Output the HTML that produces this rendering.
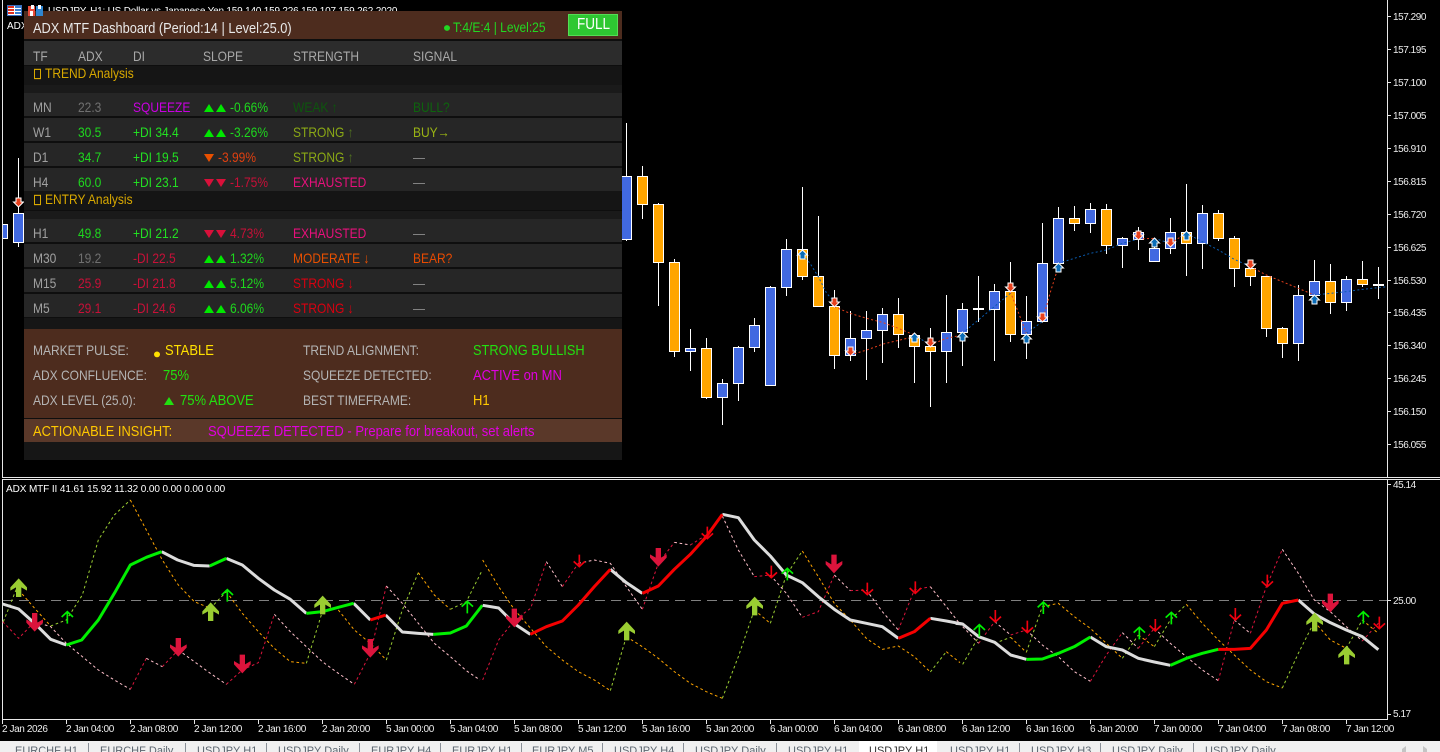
<!DOCTYPE html>
<html><head><meta charset="utf-8"><title>ADX MTF</title>
<style>
html,body{margin:0;padding:0;background:#000;width:1440px;height:752px;overflow:hidden}
body{position:relative;font-family:"Liberation Sans",sans-serif}
svg.m{position:absolute;left:0;top:0}
svg text{font-family:"Liberation Sans",sans-serif}
.ax{font-size:10px;fill:#eee;letter-spacing:-.45px}
.tm{font-size:10px;fill:#eee;letter-spacing:-.4px}
.tab{font-size:11px;fill:#5c6670}
.d{fill:none;stroke-width:3;stroke-dasharray:8 8}
.o{stroke:#ffa500}.y{stroke:#9acd32}.c{stroke:#dc143c}.p{stroke:#ffc0cb}
.l{fill:none;stroke-width:9;stroke-linejoin:round}
.w{stroke:#dcdcdc}.g{stroke:#00f000}.r{stroke:#f50000}
.cd{stroke:#fff;stroke-width:1}
.b{fill:#4169e1}.a{fill:#ffa500}
.dd{fill:none;stroke-width:3;stroke-dasharray:6 7}
.bl{stroke:#0a5cb0}.rd{stroke:#e8401c}
#panel{position:absolute;left:24px;top:11px;width:598px;height:449px;background:#0e0e0e;overflow:hidden}
#panel div{position:absolute;left:0;width:598px}
.rw{background:#262626;height:23px}
.sec{background:#151515;height:19px}
.ln{position:absolute;left:0;width:1440px;height:14px;white-space:nowrap;font-size:12px;line-height:14px;transform:scaleY(1.15);transform-origin:0 11px}
.ln span{position:absolute;top:0;white-space:nowrap}
.box{display:inline-block;width:5px;height:7px;border:1px solid #d8a800;position:absolute;top:3px}
.tu,.td{position:absolute;top:4px;width:0;height:0;border-left:5px solid transparent;border-right:5px solid transparent}
.tu{border-bottom:7px solid #00e800}
.td{border-top:7px solid #d8103a}
.dot{position:absolute;width:6px;height:5px;border-radius:50%}
</style></head><body>
<svg class="m" width="1440" height="752" viewBox="0 0 1440 752" xmlns="http://www.w3.org/2000/svg">
<defs>
<polygon id="bu" points="0,0 25,27 25,37 8,27 8,56 -8,56 -8,27 -25,37 -25,27" fill="#9acd32"/>
<polygon id="bd" points="0,0 25,-27 25,-37 8,-27 8,-56 -8,-56 -8,-27 -25,-37 -25,-27" fill="#dc143c"/>
<path id="su" d="M0,2V38M-17,18L0,2L17,18" fill="none" stroke="#00f000" stroke-width="5"/>
<path id="sd" d="M0,-2V-38M-17,-18L0,-2L17,-18" fill="none" stroke="#f00010" stroke-width="5"/>
<polygon id="mu" points="0,-5 5,0 2.500,0 2.500,4 -2.500,4 -2.500,0 -5,0" fill="#0a6cb8" stroke="#fff" stroke-width="1"/>
<polygon id="md" points="0,5 5,0 2.500,0 2.500,-4 -2.500,-4 -2.500,0 -5,0" fill="#e8401c" stroke="#fff" stroke-width="1"/>
</defs>
<rect width="1440" height="752" fill="#000"/>
<!-- top text -->
<text x="48" y="14" font-size="10" fill="#fff" letter-spacing="-.2">USDJPY, H1: US Dollar vs Japanese Yen 159.140 159.226 159.107 159.262 2020</text>
<text x="7" y="29" font-size="10" fill="#fff">ADX MTF</text>
<!-- candles -->
<g class="cd" shape-rendering="crispEdges">
<path d="M18.500 158V247M626.500 123V241M642.500 166V219M658.500 203V306M674.500 259V357M690.500 329V371M706.500 338V399M722.500 379V425M738.500 346V401M754.500 318V352M770.500 286V385M786.500 239V296M802.500 187V280M818.500 216V306M834.500 290V369M850.500 311V361M866.500 311V380M882.500 308V363M898.500 298V348M914.500 335V383M930.500 328V407M946.500 295V383M962.500 303V366M978.500 276V322M994.500 284V361M1010.500 262V342M1026.500 296V359M1042.500 223V321M1058.500 207V263M1074.500 206V231M1090.500 203V233M1106.500 204V254M1122.500 237V268M1138.500 227V250M1154.500 238V261M1170.500 218V254M1186.500 184V276M1202.500 205V269M1218.500 210V241M1234.500 236V287M1250.500 268V286M1266.500 276V337M1282.500 327V358M1298.500 285V361M1314.500 260V296M1330.500 264V314M1346.500 276V311M1362.500 261V287M1378.500 267V299"/>
<rect class="b" x="-2.500" y="224.500" width="10" height="14"/>
<rect class="b" x="13.500" y="213.500" width="10" height="29"/>
<rect class="b" x="621.500" y="176.500" width="10" height="63"/>
<rect class="a" x="637.500" y="176.500" width="10" height="28"/>
<rect class="a" x="653.500" y="204.500" width="10" height="58"/>
<rect class="a" x="669.500" y="262.500" width="10" height="89"/>
<rect class="b" x="685.500" y="348.500" width="10" height="3"/>
<rect class="a" x="701.500" y="348.500" width="10" height="49"/>
<rect class="b" x="717.500" y="383.500" width="10" height="14"/>
<rect class="b" x="733.500" y="347.500" width="10" height="36"/>
<rect class="b" x="749.500" y="325.500" width="10" height="22"/>
<rect class="b" x="765.500" y="287.500" width="10" height="98"/>
<rect class="b" x="781.500" y="249.500" width="10" height="38"/>
<rect class="a" x="797.500" y="249.500" width="10" height="27"/>
<rect class="a" x="813.500" y="276.500" width="10" height="30"/>
<rect class="a" x="829.500" y="306.500" width="10" height="49"/>
<rect class="b" x="845.500" y="338.500" width="10" height="17"/>
<rect class="b" x="861.500" y="330.500" width="10" height="8"/>
<rect class="b" x="877.500" y="314.500" width="10" height="16"/>
<rect class="a" x="893.500" y="314.500" width="10" height="20"/>
<rect class="a" x="909.500" y="335.500" width="10" height="11"/>
<rect class="a" x="925.500" y="346.500" width="10" height="5"/>
<rect class="b" x="941.500" y="332.500" width="10" height="19"/>
<rect class="b" x="957.500" y="309.500" width="10" height="23"/>
<rect x="973" y="308" width="11" height="2" fill="#fff" stroke="none"/>
<rect class="b" x="989.500" y="291.500" width="10" height="18"/>
<rect class="a" x="1005.500" y="291.500" width="10" height="43"/>
<rect class="b" x="1021.500" y="321.500" width="10" height="13"/>
<rect class="b" x="1037.500" y="263.500" width="10" height="58"/>
<rect class="b" x="1053.500" y="218.500" width="10" height="45"/>
<rect class="a" x="1069.500" y="218.500" width="10" height="5"/>
<rect class="b" x="1085.500" y="209.500" width="10" height="14"/>
<rect class="a" x="1101.500" y="209.500" width="10" height="36"/>
<rect class="b" x="1117.500" y="238.500" width="10" height="7"/>
<rect class="b" x="1133.500" y="232.500" width="10" height="7"/>
<rect class="b" x="1149.500" y="248.500" width="10" height="13"/>
<rect class="b" x="1165.500" y="232.500" width="10" height="16"/>
<rect class="a" x="1181.500" y="232.500" width="10" height="11"/>
<rect class="b" x="1197.500" y="213.500" width="10" height="30"/>
<rect class="a" x="1213.500" y="213.500" width="10" height="25"/>
<rect class="a" x="1229.500" y="238.500" width="10" height="30"/>
<rect class="a" x="1245.500" y="268.500" width="10" height="8"/>
<rect class="a" x="1261.500" y="276.500" width="10" height="52"/>
<rect class="a" x="1277.500" y="328.500" width="10" height="15"/>
<rect class="b" x="1293.500" y="295.500" width="10" height="48"/>
<rect class="b" x="1309.500" y="281.500" width="10" height="14"/>
<rect class="a" x="1325.500" y="281.500" width="10" height="21"/>
<rect class="b" x="1341.500" y="279.500" width="10" height="23"/>
<rect class="a" x="1357.500" y="279.500" width="10" height="5"/>
<rect x="1373" y="284" width="11" height="2" fill="#fff" stroke="none"/>
</g>
<rect x="0" y="0" width="2" height="752" fill="#000"/>
<!-- frames -->
<g fill="#e8e8e8">
<rect x="2" y="0" width="1" height="478"/><rect x="1387" y="0" width="1" height="478"/>
<rect x="2" y="477" width="1438" height="1"/><rect x="2" y="479" width="1438" height="1"/>
<rect x="2" y="479" width="1" height="241"/><rect x="1387" y="479" width="1" height="241"/>
<rect x="2" y="719" width="1386" height="1"/>
<rect x="1387" y="484" width="4" height="1"/><rect x="1387" y="600" width="4" height="1"/><rect x="1387" y="714" width="4" height="1"/>
<rect x="1387" y="16" width="4" height="1"/><rect x="1387" y="49" width="4" height="1"/><rect x="1387" y="82" width="4" height="1"/><rect x="1387" y="115" width="4" height="1"/><rect x="1387" y="148" width="4" height="1"/><rect x="1387" y="181" width="4" height="1"/><rect x="1387" y="214" width="4" height="1"/><rect x="1387" y="247" width="4" height="1"/><rect x="1387" y="280" width="4" height="1"/><rect x="1387" y="312" width="4" height="1"/><rect x="1387" y="345" width="4" height="1"/><rect x="1387" y="378" width="4" height="1"/><rect x="1387" y="411" width="4" height="1"/><rect x="1387" y="444" width="4" height="1"/>
<rect x="2" y="720" width="1" height="4"/><rect x="66" y="720" width="1" height="4"/><rect x="130" y="720" width="1" height="4"/><rect x="194" y="720" width="1" height="4"/><rect x="258" y="720" width="1" height="4"/><rect x="322" y="720" width="1" height="4"/><rect x="386" y="720" width="1" height="4"/><rect x="450" y="720" width="1" height="4"/><rect x="514" y="720" width="1" height="4"/><rect x="578" y="720" width="1" height="4"/><rect x="642" y="720" width="1" height="4"/><rect x="706" y="720" width="1" height="4"/><rect x="770" y="720" width="1" height="4"/><rect x="834" y="720" width="1" height="4"/><rect x="898" y="720" width="1" height="4"/><rect x="962" y="720" width="1" height="4"/><rect x="1026" y="720" width="1" height="4"/><rect x="1090" y="720" width="1" height="4"/><rect x="1154" y="720" width="1" height="4"/><rect x="1218" y="720" width="1" height="4"/><rect x="1282" y="720" width="1" height="4"/><rect x="1346" y="720" width="1" height="4"/>
</g>
<!-- price axis -->
<g class="ax">
<text x="1393" y="20">157.290</text><text x="1393" y="53">157.195</text><text x="1393" y="86">157.100</text><text x="1393" y="119">157.005</text><text x="1393" y="152">156.910</text><text x="1393" y="185">156.815</text><text x="1393" y="218">156.720</text><text x="1393" y="251">156.625</text><text x="1393" y="284">156.530</text><text x="1393" y="316">156.435</text><text x="1393" y="349">156.340</text><text x="1393" y="382">156.245</text><text x="1393" y="415">156.150</text><text x="1393" y="448">156.055</text>
<text x="1393" y="488">45.14</text><text x="1393" y="604">25.00</text><text x="1393" y="717">5.17</text>
</g>
<!-- price dashed -->
<g transform="translate(620,120) scale(.33333)">
<path class="dd bl" d="M547,404L570,430L595,470L620,520L643,545M883,645L931,675M1027,640L1075,600L1123,560L1171,520"/>
<path class="dd rd" d="M643,560L690,580L740,595L790,608L835,625L883,645M691,705L740,690L790,672L840,660L883,650M931,675L979,655L1027,645"/>
</g>
<g transform="translate(1000,160) scale(.33333)">
<path class="dd rd" d="M31,395L60,470L79,520M127,485L150,400L175,320M415,237L463,235M511,250L559,220M751,320L799,345L847,365L895,385L943,405"/>
<path class="dd bl" d="M79,520L127,485M175,310L223,295L271,280L319,270L367,250L415,237M463,235L511,250M559,220L607,245L655,270L703,298L751,320M943,405L991,400L1039,395L1087,388L1135,383L1162,380"/>
</g>
<use href="#md" x="18.500" y="202"/><use href="#mu" x="802.500" y="255"/><use href="#md" x="834.500" y="302"/><use href="#md" x="850.500" y="351"/><use href="#mu" x="914.500" y="338"/><use href="#md" x="930.500" y="342"/><use href="#mu" x="962.500" y="337"/><use href="#md" x="1010.500" y="287"/><use href="#mu" x="1026.500" y="339"/><use href="#md" x="1042.500" y="317"/><use href="#mu" x="1058.500" y="268"/><use href="#md" x="1138.500" y="235"/><use href="#mu" x="1154.500" y="243"/><use href="#md" x="1170.500" y="242"/><use href="#mu" x="1186.500" y="236"/><use href="#md" x="1250.500" y="264"/><use href="#mu" x="1314.500" y="300"/>
<!-- indicator -->
<text x="6" y="492" font-size="10" fill="#fff" letter-spacing="-.1">ADX MTF II 41.61 15.92 11.32 0.00 0.00 0.00 0.00</text>
<line x1="3" y1="600.500" x2="1387" y2="600.500" stroke="#808080" stroke-width="1" stroke-dasharray="10 6"/>
<g transform="translate(0,480) scale(.33333)">
<path class="d y" d="M10,425L30,375L56,310M152,438L199,420L247,345L295,180L343,105L391,60M631,385L679,335M919,550L967,395M1159,540L1207,390L1255,278M1351,388L1399,365L1447,270"/>
<path class="d o" d="M56,330L104,385L152,438M391,60L439,150L487,240L535,315L583,365L631,385M679,335L727,400L775,455L823,505L871,545L919,550M1015,390L1063,450L1111,490L1159,540M1255,278L1303,345L1351,388"/>
<path class="d c" d="M8,425L56,475L104,425M391,628L439,535M487,560L535,510M679,613L727,570L775,548L823,403M1063,613L1111,520L1159,318"/>
<path class="d p" d="M104,425L152,440L199,490L247,530L295,570L343,600L391,628M439,535L487,560M535,510L583,545L631,580L679,613M823,403L871,455L919,500L967,545L1015,580L1063,613M1159,318L1207,370L1255,430L1303,490L1351,530L1399,572L1440,600"/>
<path class="l w" d="M8,372L56,387L104,430L152,478L199,495M485,215L533,240L581,256L629,258M679,235L727,255L775,295L823,330L871,358L919,400M1061,370L1111,420M1157,405L1207,456L1255,460L1300,463"/>
<path class="l g" d="M199,495L245,480L295,420L343,340L391,255L439,232L485,215M629,258L679,235M919,400L967,395L1015,382L1061,370M1300,463L1351,459L1399,438L1447,376"/>
<path class="l r" d="M1111,420L1157,405"/>
<use href="#bu" x="56" y="295"/><use href="#bu" x="632" y="367"/><use href="#bu" x="968" y="347"/>
<use href="#bd" x="104" y="455"/><use href="#bd" x="535" y="530"/><use href="#bd" x="727" y="580"/><use href="#bd" x="1111" y="533"/>
<use href="#su" x="202" y="393"/><use href="#su" x="682" y="327"/><use href="#su" x="1402" y="362"/>
</g>
<g transform="translate(480,480) scale(.33333)">
<path class="d o" d="M8,240L56,320L104,390L152,445L199,500L247,540L295,575L343,600L391,632M439,470L487,500L535,535L583,575L631,610L679,635L727,655M823,390L871,430M967,213L1015,290L1063,370L1111,420L1159,475L1207,508L1255,498L1303,530L1351,576M1399,515L1440,548"/>
<path class="d y" d="M391,632L439,470M727,655L775,530L823,390M871,430L919,285L967,213M1351,576L1399,515"/>
<path class="d c" d="M8,600L56,480L104,420L152,385L199,245M247,320L295,250M487,388L535,250L583,187M631,195L679,165L727,108M823,290L871,285M967,412L1015,395L1063,285M1111,332L1159,330M1255,450L1303,330L1351,320"/>
<path class="d p" d="M199,245L247,320M295,250L343,240L391,250L439,320L487,388M583,187L631,195M727,108L775,210L823,290M871,285L919,340L967,412M1063,285L1111,332M1159,330L1207,395L1255,450M1351,320L1399,380L1440,432"/>
<path class="l w" d="M8,376L56,384L104,432L151,463M391,268L439,308L487,340M727,103L775,113L823,180L871,228L919,285L967,308L1015,350L1063,388L1111,420L1159,430L1207,440L1255,475M1351,415L1399,423L1447,432"/>
<path class="l r" d="M151,463L199,440L247,423L295,375L343,320L391,268M487,340L535,318L583,268L631,223L679,170L727,103M1255,475L1303,455L1351,415"/>
<use href="#bu" x="440" y="425"/><use href="#bu" x="824" y="350"/>
<use href="#bd" x="103" y="442"/><use href="#bd" x="535" y="260"/><use href="#bd" x="1062" y="280"/>
<use href="#sd" x="298" y="262"/><use href="#sd" x="682" y="178"/><use href="#sd" x="874" y="295"/><use href="#sd" x="1162" y="346"/><use href="#sd" x="1306" y="342"/>
<use href="#su" x="922" y="263"/>
</g>
<g transform="translate(960,480) scale(.33333)">
<path class="d y" d="M8,553L56,470M104,490L152,472M199,517L247,380M487,535L535,465M583,500L631,420L679,373M967,624L1015,520L1063,425M1159,505L1207,420"/>
<path class="d o" d="M56,470L104,490M152,472L199,517M247,380L295,370L343,410L391,445L439,490L487,535M535,465L583,500M679,373L727,430L775,480L823,525L871,570L919,605L967,624M1063,425L1111,480L1159,505M1207,420L1255,460"/>
<path class="d p" d="M8,440L56,490M104,425L152,465M199,450L247,495L295,530L343,575L391,604M487,458L535,505M583,445L631,490L679,530L727,570L775,602M823,420L871,460M967,208L1015,280L1063,360L1111,395L1159,440L1207,483"/>
<path class="d c" d="M56,490L104,425M152,465L199,450M391,604L439,525L487,458M535,505L583,445M775,602L823,420M871,460L919,320L967,208M1207,483L1255,430"/>
<path class="l w" d="M-13,430L8,432L56,470L104,487L152,525L199,538M391,471L439,500L487,510L535,535L583,546L631,556M1015,360L1063,402L1111,428L1159,450L1207,470L1255,509"/>
<path class="l g" d="M199,538L247,537L295,520L343,500L391,471M631,556L679,535L727,520L775,508"/>
<path class="l r" d="M775,508L823,508L871,505L919,450L967,370L1015,360"/>
<use href="#bu" x="1064" y="398"/><use href="#bu" x="1160" y="497"/>
<use href="#bd" x="1111" y="397"/>
<use href="#su" x="58" y="432"/><use href="#su" x="250" y="364"/><use href="#su" x="538" y="440"/><use href="#su" x="634" y="395"/><use href="#su" x="1210" y="393"/>
<use href="#sd" x="106" y="428"/><use href="#sd" x="202" y="460"/><use href="#sd" x="586" y="455"/><use href="#sd" x="826" y="422"/><use href="#sd" x="922" y="322"/><use href="#sd" x="1258" y="448"/>
</g>
<!-- time axis -->
<g class="tm">
<text x="2" y="732">2 Jan 2026</text><text x="66" y="732">2 Jan 04:00</text><text x="130" y="732">2 Jan 08:00</text><text x="194" y="732">2 Jan 12:00</text><text x="258" y="732">2 Jan 16:00</text><text x="322" y="732">2 Jan 20:00</text><text x="386" y="732">5 Jan 00:00</text><text x="450" y="732">5 Jan 04:00</text><text x="514" y="732">5 Jan 08:00</text><text x="578" y="732">5 Jan 12:00</text><text x="642" y="732">5 Jan 16:00</text><text x="706" y="732">5 Jan 20:00</text><text x="770" y="732">6 Jan 00:00</text><text x="834" y="732">6 Jan 04:00</text><text x="898" y="732">6 Jan 08:00</text><text x="962" y="732">6 Jan 12:00</text><text x="1026" y="732">6 Jan 16:00</text><text x="1090" y="732">6 Jan 20:00</text><text x="1154" y="732">7 Jan 00:00</text><text x="1218" y="732">7 Jan 04:00</text><text x="1282" y="732">7 Jan 08:00</text><text x="1346" y="732">7 Jan 12:00</text>
</g>
<!-- tabs -->
<rect x="0" y="741" width="1440" height="11" fill="#f0f0f0"/>
<rect x="859" y="741" width="78" height="11" fill="#fff"/>
<g fill="#8a9098"><rect x="88" y="743" width="1" height="9"/><rect x="185" y="743" width="1" height="9"/><rect x="266" y="743" width="1" height="9"/><rect x="359" y="743" width="1" height="9"/><rect x="440" y="743" width="1" height="9"/><rect x="521" y="743" width="1" height="9"/><rect x="602" y="743" width="1" height="9"/><rect x="683" y="743" width="1" height="9"/><rect x="776" y="743" width="1" height="9"/><rect x="1019" y="743" width="1" height="9"/><rect x="1100" y="743" width="1" height="9"/><rect x="1193" y="743" width="1" height="9"/></g>
<g class="tab">
<text x="15" y="754">EURCHF H1</text><text x="100" y="754">EURCHF Daily</text><text x="197" y="754">USDJPY H1</text><text x="278" y="754">USDJPY Daily</text><text x="371" y="754">EURJPY H4</text><text x="452" y="754">EURJPY H1</text><text x="532" y="754">EURJPY M5</text><text x="614" y="754">USDJPY H4</text><text x="695" y="754">USDJPY Daily</text><text x="788" y="754">USDJPY H1</text><text x="869" y="754" fill="#333">USDJPY H1</text><text x="950" y="754">USDJPY H1</text><text x="1031" y="754">USDJPY H3</text><text x="1112" y="754">USDJPY Daily</text><text x="1205" y="754">USDJPY Daily</text>
</g>
<polygon points="1402,749 1406,746 1406,752 1402,752" fill="#c4c4c4"/><polygon points="1427,749 1423,746 1423,752 1427,752" fill="#c4c4c4"/>
</svg>

<div id="panel">
<div style="top:0;height:28px;background:#4d2c1e"></div>
<div style="top:30px;height:24px;background:#2c2c2c"></div>
<div class="sec" style="top:55px"></div>
<div style="top:74px;height:8px;background:#1a1a1a"></div>
<div class="rw" style="top:82px"></div><div class="rw" style="top:107px"></div><div class="rw" style="top:132px"></div><div class="rw" style="top:157px"></div>
<div class="sec" style="top:180px"></div>
<div style="top:200px;height:8px;background:#1a1a1a"></div>
<div class="rw" style="top:208px"></div><div class="rw" style="top:233px"></div><div class="rw" style="top:258px"></div><div class="rw" style="top:283px"></div>
<div style="top:307px;height:11px;background:#161616"></div>
<div style="top:318px;height:89px;background:#4d2c1e"></div>
<div style="top:408px;height:23px;background:#5a3829"></div>
<div style="top:431px;height:18px;background:#161616"></div>
<div style="left:544px;top:3px;width:50px;height:22px;background:#2ec832;box-shadow:inset 0 0 0 1px #55dd55"></div>
</div>

<!-- top-left icons sit above the panel -->
<svg class="m" width="60" height="20" viewBox="0 0 60 20" xmlns="http://www.w3.org/2000/svg">
<rect x="7.500" y="5.500" width="14" height="10" fill="#fff" stroke="#3a6fc0"/><rect x="8" y="6" width="6" height="2" fill="#e03020"/><rect x="8" y="9" width="6" height="2" fill="#e03020"/><rect x="8" y="12" width="6" height="2" fill="#e03020"/><rect x="15" y="6" width="6" height="2" fill="#3a7fd0"/><rect x="15" y="9" width="6" height="2" fill="#3a7fd0"/><rect x="15" y="12" width="6" height="2" fill="#3a7fd0"/>
<rect x="28" y="6" width="7" height="10" fill="#e84a3a"/><rect x="36" y="6" width="7" height="10" fill="#2f86d0"/><rect x="31" y="5" width="3" height="4" fill="#fff"/><rect x="38" y="5" width="3" height="4" fill="#fff"/><rect x="30" y="11" width="3" height="5" fill="#fff"/>
</svg>

<div style="position:absolute;left:0;top:0;width:1440px;height:752px;overflow:hidden">
<div class="ln" style="top:22px;font-size:12.8px;color:#e8e8e8"><span style="left:33px">ADX MTF Dashboard (Period:14 | Level:25.0)</span></div>
<div class="ln" style="top:21px;color:#22d822"><i class="dot" style="left:444px;top:5px;background:#22d822"></i><span style="left:453px">T:4/E:4 | Level:25</span></div>
<div class="ln" style="top:18px;font-size:13.500px;color:#fff"><span style="left:577px">FULL</span></div>

<div class="ln" style="top:50px;color:#a8a8a8"><span style="left:33px">TF</span><span style="left:78px">ADX</span><span style="left:133px">DI</span><span style="left:203px">SLOPE</span><span style="left:293px">STRENGTH</span><span style="left:413px">SIGNAL</span></div>
<div class="ln" style="top:67px;color:#d8a800"><i class="box" style="left:34px"></i><span style="left:45px">TREND Analysis</span></div>

<div class="ln" style="top:101px"><span style="left:33px;color:#a0a0a0">MN</span><span style="left:78px;color:#707070">22.3</span><span style="left:133px;color:#c800e0">SQUEEZE</span><i class="tu" style="left:204px"></i><i class="tu" style="left:216px"></i><span style="left:230px;color:#1ed81e">-0.66%</span><span style="left:293px;color:#0d560d">WEAK ↑</span><span style="left:413px;color:#0d640d">BULL?</span></div>
<div class="ln" style="top:126px"><span style="left:33px;color:#a0a0a0">W1</span><span style="left:78px;color:#1ed81e">30.5</span><span style="left:133px;color:#22e022">+DI 34.4</span><i class="tu" style="left:204px"></i><i class="tu" style="left:216px"></i><span style="left:230px;color:#1ed81e">-3.26%</span><span style="left:293px;color:#8aa815">STRONG <b style="font-weight:400;color:#4f6f20">↑</b></span><span style="left:413px;color:#9ab414">BUY→</span></div>
<div class="ln" style="top:151px"><span style="left:33px;color:#a0a0a0">D1</span><span style="left:78px;color:#1ed81e">34.7</span><span style="left:133px;color:#22e022">+DI 19.5</span><i class="td" style="left:204px;border-top-color:#e85000"></i><span style="left:218px;color:#e04010">-3.99%</span><span style="left:293px;color:#8aa815">STRONG <b style="font-weight:400;color:#4f6f20">↑</b></span><span style="left:413px;color:#888">—</span></div>
<div class="ln" style="top:176px"><span style="left:33px;color:#a0a0a0">H4</span><span style="left:78px;color:#1ed81e">60.0</span><span style="left:133px;color:#22e022">+DI 23.1</span><i class="td" style="left:204px"></i><i class="td" style="left:216px"></i><span style="left:230px;color:#c81038">-1.75%</span><span style="left:293px;color:#e8107c">EXHAUSTED</span><span style="left:413px;color:#888">—</span></div>

<div class="ln" style="top:193px;color:#d8a800"><i class="box" style="left:34px"></i><span style="left:45px">ENTRY Analysis</span></div>

<div class="ln" style="top:227px"><span style="left:33px;color:#a0a0a0">H1</span><span style="left:78px;color:#1ed81e">49.8</span><span style="left:133px;color:#22e022">+DI 21.2</span><i class="td" style="left:204px"></i><i class="td" style="left:216px"></i><span style="left:230px;color:#c81038">4.73%</span><span style="left:293px;color:#e8107c">EXHAUSTED</span><span style="left:413px;color:#888">—</span></div>
<div class="ln" style="top:252px"><span style="left:33px;color:#a0a0a0">M30</span><span style="left:78px;color:#707070">19.2</span><span style="left:133px;color:#c81038">-DI 22.5</span><i class="tu" style="left:204px"></i><i class="tu" style="left:216px"></i><span style="left:230px;color:#1ed81e">1.32%</span><span style="left:293px;color:#e85000">MODERATE ↓</span><span style="left:413px;color:#e84a00">BEAR?</span></div>
<div class="ln" style="top:277px"><span style="left:33px;color:#a0a0a0">M15</span><span style="left:78px;color:#c81038">25.9</span><span style="left:133px;color:#c81038">-DI 21.8</span><i class="tu" style="left:204px"></i><i class="tu" style="left:216px"></i><span style="left:230px;color:#1ed81e">5.12%</span><span style="left:293px;color:#d80010">STRONG ↓</span><span style="left:413px;color:#888">—</span></div>
<div class="ln" style="top:302px"><span style="left:33px;color:#a0a0a0">M5</span><span style="left:78px;color:#c81038">29.1</span><span style="left:133px;color:#c81038">-DI 24.6</span><i class="tu" style="left:204px"></i><i class="tu" style="left:216px"></i><span style="left:230px;color:#1ed81e">6.06%</span><span style="left:293px;color:#d80010">STRONG ↓</span><span style="left:413px;color:#888">—</span></div>

<div class="ln" style="top:344px;color:#b4b4b4"><span style="left:33px">MARKET PULSE:</span><i class="dot" style="left:154px;top:8px;background:#ffe000"></i><span style="left:165px;color:#ffe000;font-size:13px">STABLE</span><span style="left:303px">TREND ALIGNMENT:</span><span style="left:473px;color:#22e010;font-size:12.800px">STRONG BULLISH</span></div>
<div class="ln" style="top:369px;color:#b4b4b4"><span style="left:33px">ADX CONFLUENCE:</span><span style="left:163px;color:#22e010;font-size:13px">75%</span><span style="left:303px">SQUEEZE DETECTED:</span><span style="left:473px;color:#e000e0;font-size:13px">ACTIVE on MN</span></div>
<div class="ln" style="top:394px;color:#b4b4b4"><span style="left:33px">ADX LEVEL (25.0):</span><i class="tu" style="left:164px;border-bottom-color:#22e010"></i><span style="left:180px;color:#22e010;font-size:13px">75% ABOVE</span><span style="left:303px">BEST TIMEFRAME:</span><span style="left:473px;color:#ffc800;font-size:13px">H1</span></div>
<div class="ln" style="top:425px;font-size:12.850px;color:#ffc800"><span style="left:33px">ACTIONABLE INSIGHT:</span><span style="left:208px;color:#e000e0;font-size:13px">SQUEEZE DETECTED - Prepare for breakout, set alerts</span></div>
</div>
</body></html>
